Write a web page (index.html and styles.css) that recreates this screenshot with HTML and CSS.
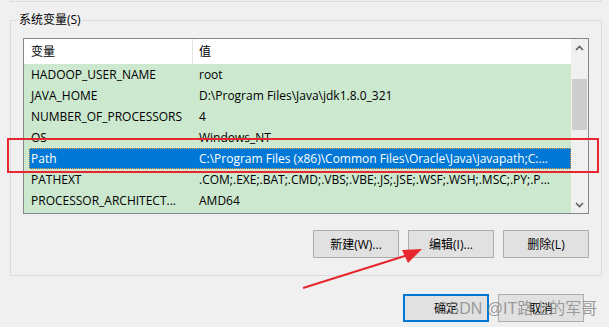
FILE: index.html
```html
<!DOCTYPE html>
<html lang="zh-CN">
<head>
    <meta charset="UTF-8">
    <meta name="viewport" content="width=device-width, initial-scale=1.0">
    <title>环境变量</title>
    <link rel="stylesheet" href="styles.css">
</head>
<body>
    <!-- bottom edge of the user variables group above -->
    <div class="user-group"></div>

    <fieldset class="group">
        <legend>系统变量(S)</legend>
        <div class="list">
            <div class="list-main">
                <div class="list-head">
                    <div class="head-name">变量</div>
                    <div class="head-value">值</div>
                </div>
                <div class="rows">
                    <div class="row"><span class="cell-name">HADOOP_USER_NAME</span><span class="cell-value">root</span></div>
                    <div class="row"><span class="cell-name">JAVA_HOME</span><span class="cell-value">D:\Program Files\Java\jdk1.8.0_321</span></div>
                    <div class="row"><span class="cell-name">NUMBER_OF_PROCESSORS</span><span class="cell-value">4</span></div>
                    <div class="row"><span class="cell-name">OS</span><span class="cell-value">Windows_NT</span></div>
                    <div class="row selected"><span class="cell-name">Path</span><span class="cell-value">C:\Program Files (x86)\Common Files\Oracle\Java\javapath;C:...</span></div>
                    <div class="row"><span class="cell-name">PATHEXT</span><span class="cell-value">.COM;.EXE;.BAT;.CMD;.VBS;.VBE;.JS;.JSE;.WSF;.WSH;.MSC;.PY;.P...</span></div>
                    <div class="row"><span class="cell-name">PROCESSOR_ARCHITECT...</span><span class="cell-value">AMD64</span></div>
                </div>
            </div>
            <div class="scrollbar">
                <div class="scroll-btn">
                    <svg width="9" height="6" viewBox="0 0 9 6"><polyline points="1,5 4.5,1.5 8,5" fill="none" stroke="#606060" stroke-width="1.6"/></svg>
                </div>
                <div class="scroll-track">
                    <div class="scroll-thumb"></div>
                </div>
                <div class="scroll-btn">
                    <svg width="9" height="6" viewBox="0 0 9 6"><polyline points="1,1 4.5,4.5 8,1" fill="none" stroke="#606060" stroke-width="1.6"/></svg>
                </div>
            </div>
        </div>
        <div class="actions">
            <button>新建(W)...</button>
            <button>编辑(I)...</button>
            <button>删除(L)</button>
        </div>
    </fieldset>

    <div class="dialog-actions">
        <button class="default">确定</button>
        <button>取消</button>
    </div>

    <!-- annotations drawn over the screenshot -->
    <div class="mark-box"></div>
    <svg class="mark-arrow" width="609" height="327" viewBox="0 0 609 327">
        <line x1="303" y1="288" x2="408" y2="255" stroke="#e8262d" stroke-width="2"/>
        <polygon points="422,249 402,250 408,263" fill="#e8262d"/>
    </svg>
    <div class="watermark">CSDN @IT路上的军哥</div>
</body>
</html>
```

FILE: styles.css
```css
body {
    margin: 0;
    width: 609px;
    height: 327px;
    position: relative;
    overflow: hidden;
    background-color: #f0f0f0;
    font-family: "Open Sans", "Noto Sans CJK SC", sans-serif;
    font-size: 12px;
    color: #000;
}

.user-group {
    box-sizing: border-box;
    margin-left: 10px;
    width: 592px;
    height: 2px;
    border: 1px solid #dcdcdc;
    border-top: none;
}

.group {
    box-sizing: border-box;
    margin: 10px 0 0 10px;
    width: 592px;
    min-width: 0;
    padding: 10px 12px 17px 12px;
    border: 1px solid #dcdcdc;
}

.group legend {
    margin-left: -6px;
    padding: 0 2px;
    line-height: 16px;
}

/* list view */
.list {
    box-sizing: border-box;
    display: flex;
    width: 566px;
    height: 176px;
    border: 1px solid #828790;
    background-color: #cce8cf;
}

.list-main {
    flex: 1;
    min-width: 0;
}

.list-head {
    display: flex;
    height: 25px;
    line-height: 25px;
    background-color: #fff;
}

.head-name {
    box-sizing: border-box;
    width: 169px;
    padding-left: 7px;
    border-right: 1px solid #e5e5e5;
}

.head-value {
    padding-left: 6px;
}

.rows {
    padding-left: 5px;
}

.row {
    display: flex;
    height: 21px;
    line-height: 21px;
    white-space: nowrap;
    overflow: hidden;
}

.cell-name {
    box-sizing: border-box;
    width: 163px;
    padding-left: 2px;
    flex-shrink: 0;
}

.cell-value {
    padding-left: 7px;
}

.row.selected {
    box-sizing: border-box;
    background-color: #0078d7;
    color: #fff;
    border: 1px dotted #f0a040;
    line-height: 19px;
}

.row.selected .cell-name {
    width: 162px;
    padding-left: 1px;
}

/* scrollbar */
.scrollbar {
    display: flex;
    flex-direction: column;
    width: 17px;
    background-color: #f0f0f0;
}

.scroll-btn {
    height: 17px;
    display: flex;
    align-items: center;
    justify-content: center;
}

.scroll-track {
    flex: 1;
}

.scroll-thumb {
    margin: 23px 1px 0 1px;
    height: 51px;
    background-color: #cdcdcd;
}

/* buttons */
button {
    box-sizing: border-box;
    width: 86px;
    height: 28px;
    padding: 0;
    font-family: inherit;
    font-size: 12px;
    color: #000;
    background-color: #e1e1e1;
    border: 1px solid #adadad;
}

.actions {
    display: flex;
    justify-content: flex-end;
    gap: 9px;
    width: 566px;
    margin-top: 16px;
}

.dialog-actions {
    display: flex;
    justify-content: flex-end;
    gap: 9px;
    margin-top: 18px;
    padding-right: 25px;
}

button.default {
    border: 2px solid #0078d7;
}

/* annotations */
.mark-box {
    position: absolute;
    left: 7px;
    top: 138px;
    width: 592px;
    height: 35px;
    box-sizing: border-box;
    border: 2px solid #e8262d;
}

.mark-arrow {
    position: absolute;
    left: 0;
    top: 0;
    pointer-events: none;
}

.watermark {
    position: absolute;
    left: 437px;
    top: 299px;
    font-family: "Liberation Sans", "Noto Sans CJK SC", sans-serif;
    font-size: 16px;
    line-height: 20px;
    color: rgba(140, 140, 140, 0.85);
    white-space: nowrap;
}
```
